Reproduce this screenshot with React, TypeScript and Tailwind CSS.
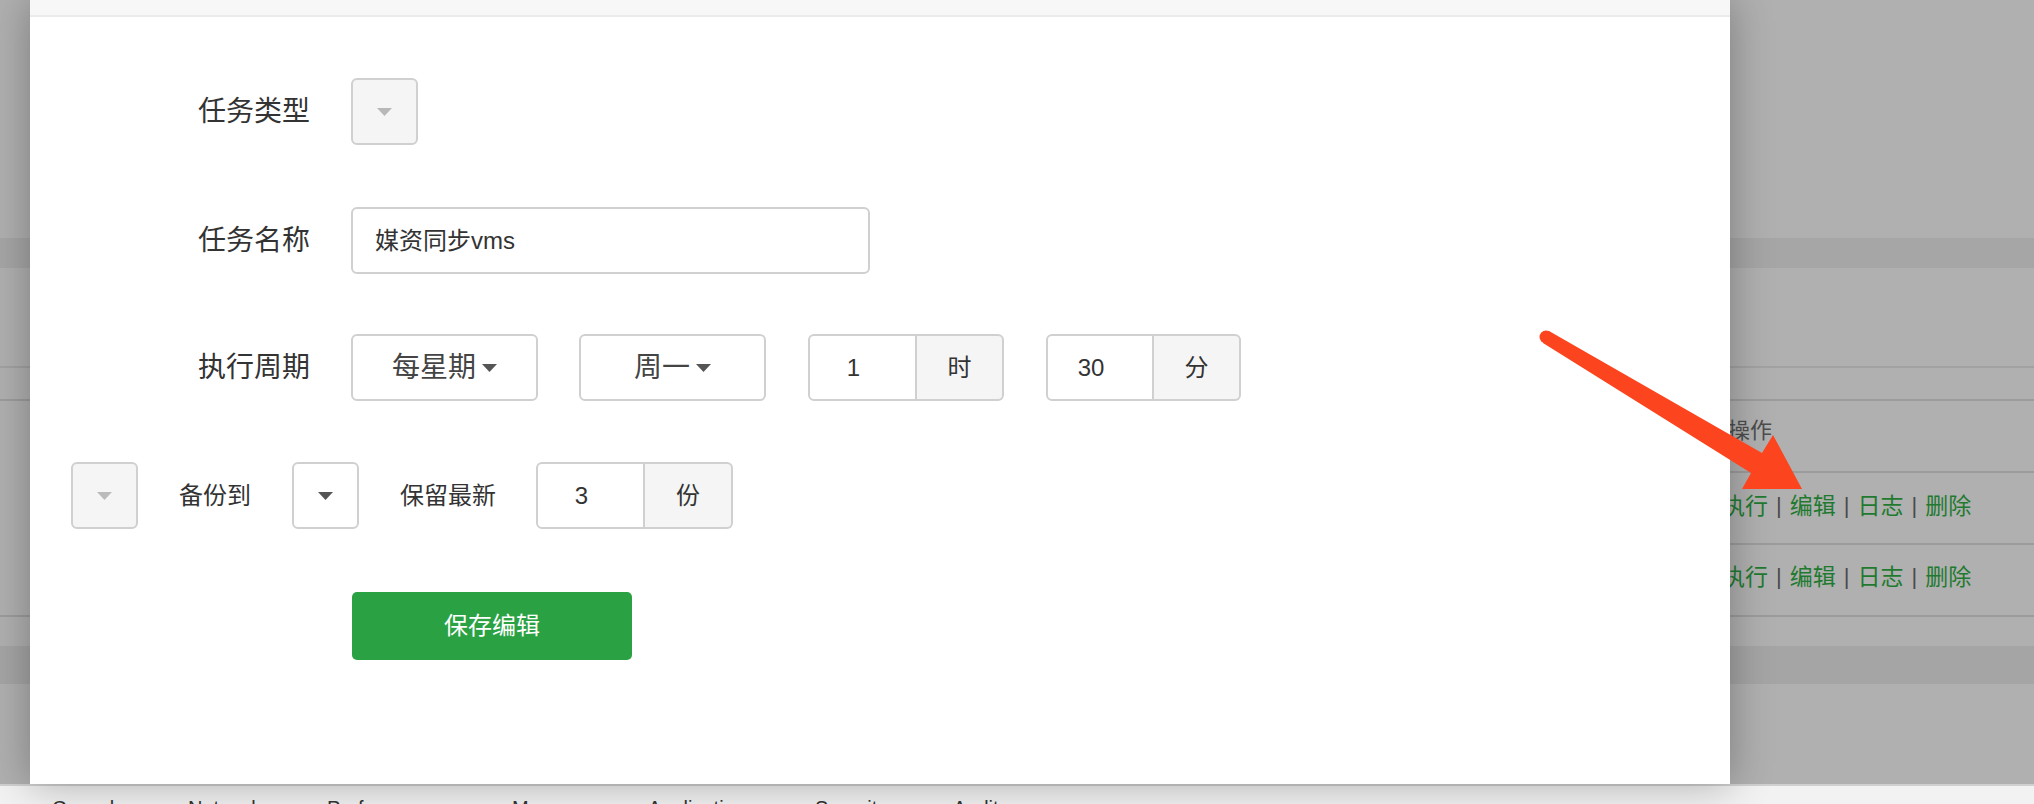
import React from 'react';

function Caret({ color = '#555' }: { color?: string }) {
    return (
        <svg width="15" height="8" viewBox="0 0 15 8" className="block">
            <polygon points="0,0 15,0 7.5,8" fill={color} />
        </svg>
    );
}

const devtoolsTabs = [
    { label: 'Console', className: 'w-[136px]' },
    { label: 'Network', className: 'w-[139px]' },
    { label: 'Performance', className: 'w-[185px]' },
    { label: 'Memory', className: 'w-[136px]' },
    { label: 'Application', className: 'w-[167px]' },
    { label: 'Security', className: 'w-[138px]' },
    { label: 'Audits', className: 'w-[100px]' },
];

function ActionLinks() {
    return (
        <div className="flex items-center gap-[8px] -ml-[4px] text-[23px] leading-none">
            <span className="text-[#1f7a30]">执行</span>
            <span className="text-[#4a4a4a] text-[22px]">|</span>
            <span className="text-[#1f7a30]">编辑</span>
            <span className="text-[#4a4a4a] text-[22px]">|</span>
            <span className="text-[#1f7a30]">日志</span>
            <span className="text-[#4a4a4a] text-[22px]">|</span>
            <span className="text-[#1f7a30]">删除</span>
        </div>
    );
}

export default function App() {
    return (
        <div className="h-[804px] w-full overflow-hidden flex flex-col font-['Liberation_Sans','Noto_Sans_CJK_SC',sans-serif]">
            {/* Page behind the modal (dimmed) */}
            <div className="relative h-[784px] bg-[#b0b0b0] flex flex-col">
                <div className="h-[238px]" />
                <div className="h-[30px] bg-[#a6a6a6]" />
                <div className="h-[98px]" />
                <div className="h-[2px] bg-[#a2a2a2]" />
                <div className="h-[31px]" />

                {/* Task table */}
                <div className="flex border-t-2 border-[#9c9c9c]">
                    <div className="flex-1" />
                    <div className="w-[308px] flex flex-col">
                        <div className="h-[70px] flex items-center pb-[12px] pl-[2px] text-[22px] text-[#4d4d4d]">操作</div>
                        <div className="h-[72px] flex items-center pb-[4px] border-t-2 border-[#9c9c9c]">
                            <ActionLinks />
                        </div>
                        <div className="h-[72px] flex items-center pb-[6px] border-t-2 border-[#9c9c9c]">
                            <ActionLinks />
                        </div>
                    </div>
                </div>
                <div className="h-[2px] bg-[#9c9c9c]" />
                <div className="h-[29px]" />
                <div className="h-[38px] bg-[#a5a5a5]" />

                {/* Modal */}
                <div className="absolute left-[30px] top-0 w-[1700px] h-[784px] bg-white shadow-[0_0_40px_rgba(0,0,0,0.3)] flex flex-col">
                    <div className="h-[17px] bg-[#f7f7f7] border-b-2 border-[#ebebeb]" />
                    <div className="flex flex-col gap-[61px] pt-[61px] text-[#333]">
                        {/* 任务类型 */}
                        <div className="flex items-center h-[67px]">
                            <label className="w-[280px] text-right text-[28px]">任务类型</label>
                            <div className="ml-[41px] w-[67px] h-[67px] rounded-[6px] border-2 border-[#d0d0d0] bg-[#f5f5f5] flex items-center justify-center">
                                <Caret color="#b8b8b8" />
                            </div>
                        </div>

                        {/* 任务名称 */}
                        <div className="flex items-center h-[67px] mt-[1px]">
                            <label className="w-[280px] text-right text-[28px]">任务名称</label>
                            <div className="ml-[41px] w-[519px] h-[67px] rounded-[6px] border-2 border-[#d0d0d0] flex items-center pl-[22px] text-[24px]">
                                媒资同步vms
                            </div>
                        </div>

                        {/* 执行周期 */}
                        <div className="flex items-center h-[67px] -mt-[1px]">
                            <label className="w-[280px] text-right text-[28px]">执行周期</label>
                            <div className="ml-[41px] w-[187px] h-[67px] rounded-[6px] border-2 border-[#d0d0d0] flex items-center justify-center gap-[6px] text-[28px] text-[#444]">
                                每星期
                                <Caret />
                            </div>
                            <div className="ml-[41px] w-[187px] h-[67px] rounded-[6px] border-2 border-[#d0d0d0] flex items-center justify-center gap-[6px] text-[28px] text-[#444]">
                                周一
                                <Caret />
                            </div>
                            <div className="ml-[42px] flex h-[67px] text-[24px]">
                                <div className="w-[109px] rounded-l-[6px] border-2 border-[#d0d0d0] flex items-center justify-center pr-[18px]">1</div>
                                <div className="w-[87px] rounded-r-[6px] border-y-2 border-r-2 border-[#d0d0d0] bg-[#f5f5f5] flex items-center justify-center">时</div>
                            </div>
                            <div className="ml-[42px] flex h-[67px] text-[24px]">
                                <div className="w-[108px] rounded-l-[6px] border-2 border-[#d0d0d0] flex items-center justify-center pr-[18px]">30</div>
                                <div className="w-[87px] rounded-r-[6px] border-y-2 border-r-2 border-[#d0d0d0] bg-[#f5f5f5] flex items-center justify-center">分</div>
                            </div>
                        </div>

                        {/* 备份 */}
                        <div className="flex items-center h-[67px] pl-[41px] text-[24px]">
                            <div className="w-[67px] h-[67px] rounded-[6px] border-2 border-[#d0d0d0] bg-[#f5f5f5] flex items-center justify-center">
                                <Caret color="#bbbbbb" />
                            </div>
                            <span className="ml-[41px]">备份到</span>
                            <div className="ml-[41px] w-[67px] h-[67px] rounded-[6px] border-2 border-[#d0d0d0] bg-white flex items-center justify-center">
                                <Caret color="#555" />
                            </div>
                            <span className="ml-[41px]">保留最新</span>
                            <div className="ml-[40px] flex h-[67px]">
                                <div className="w-[109px] rounded-l-[6px] border-2 border-[#d0d0d0] flex items-center justify-center pr-[18px]">3</div>
                                <div className="w-[88px] rounded-r-[6px] border-y-2 border-r-2 border-[#d0d0d0] bg-[#f5f5f5] flex items-center justify-center">份</div>
                            </div>
                        </div>

                        {/* Save */}
                        <div className="pl-[322px] mt-[2px]">
                            <button className="w-[280px] h-[68px] rounded-[5px] bg-[#2aa243] text-white text-[24px] flex items-center justify-center">
                                保存编辑
                            </button>
                        </div>
                    </div>
                </div>

                {/* Red annotation arrow */}
                <svg className="absolute left-0 top-0 pointer-events-none" width="2034" height="784">
                    <polygon
                        points="1549,331 1762,453 1773,435 1802,489 1742,489 1751,473 1543,343"
                        fill="#fc441e"
                    />
                    <circle cx="1546" cy="337" r="6.5" fill="#fc441e" />
                </svg>
            </div>

            {/* DevTools bar */}
            <div className="h-[20px] overflow-hidden bg-[#f2f2f2] border-t-2 border-[#d0d0d0] flex pl-[52px] pt-[10px] text-[20px] leading-[24px] text-[#333]">
                {devtoolsTabs.map((t) => (
                    <span key={t.label} className={`shrink-0 ${t.className}`}>{t.label}</span>
                ))}
            </div>
        </div>
    );
}
